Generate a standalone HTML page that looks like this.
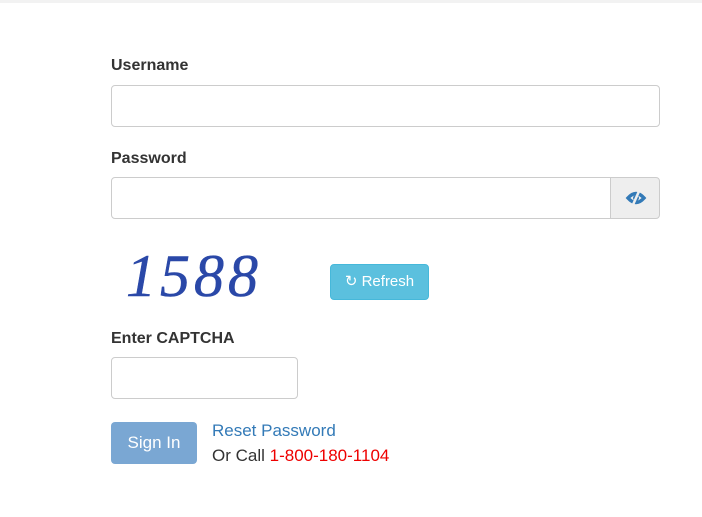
<!DOCTYPE html>
<html><head><style>
body{margin:0;width:702px;height:517px;background:#fff;font-family:"Liberation Sans",sans-serif;position:relative;overflow:hidden;color:#333}
.top{position:absolute;left:0;top:0;width:702px;height:3px;background:#f2f2f2}
label{position:absolute;font-weight:bold;font-size:16px;color:#333}
.in{position:absolute;border:1px solid #ccc;border-radius:4px;background:#fff;box-sizing:border-box}
</style></head><body>
<div class="top"></div>
<label style="left:111px;top:57px">Username</label>
<div class="in" style="left:111px;top:85px;width:549px;height:42px"></div>
<label style="left:111px;top:150px">Password</label>
<div class="in" style="left:111px;top:177px;width:500px;height:42px;border-radius:4px 0 0 4px"></div>
<div style="position:absolute;left:610px;top:177px;width:50px;height:42px;box-sizing:border-box;border:1px solid #ccc;border-radius:0 4px 4px 0;background:#eee">
<svg width="50" height="40" viewBox="0 0 50 40"><g fill="none" stroke="#337ab7" stroke-width="3.5"><path d="M17 20 Q25 11 33 20 Q25 29 17 20Z"/></g><circle cx="25" cy="20" r="3" fill="#337ab7"/><path d="M29 11 L21 29" stroke="#eee" stroke-width="2.5"/></svg></div>
<div style="position:absolute;left:126px;top:242px;font-family:'Liberation Serif',serif;font-style:italic;font-size:60px;color:#2a48a8;letter-spacing:4px;-webkit-text-stroke:0.5px #2a48a8">1588</div>
<div style="position:absolute;left:330px;top:264px;width:99px;height:36px;background:#5bc0de;border:1px solid #46b8da;box-sizing:border-box;border-radius:4px;color:#fff;font-size:15px;line-height:34px;text-align:center">&#x21bb; Refresh</div>
<label style="left:111px;top:330px">Enter CAPTCHA</label>
<div class="in" style="left:111px;top:357px;width:187px;height:42px"></div>
<div style="position:absolute;left:111px;top:422px;width:86px;height:42px;background:#7aa7d3;border-radius:4px;color:#fff;font-size:17px;line-height:42px;text-align:center">Sign In</div>
<div style="position:absolute;left:212px;top:421px;font-size:17px;color:#337ab7">Reset Password</div>
<div style="position:absolute;left:212px;top:446px;font-size:17px;color:#333">Or Call <span style="color:#e00">1-800-180-1104</span></div>
</body></html>
